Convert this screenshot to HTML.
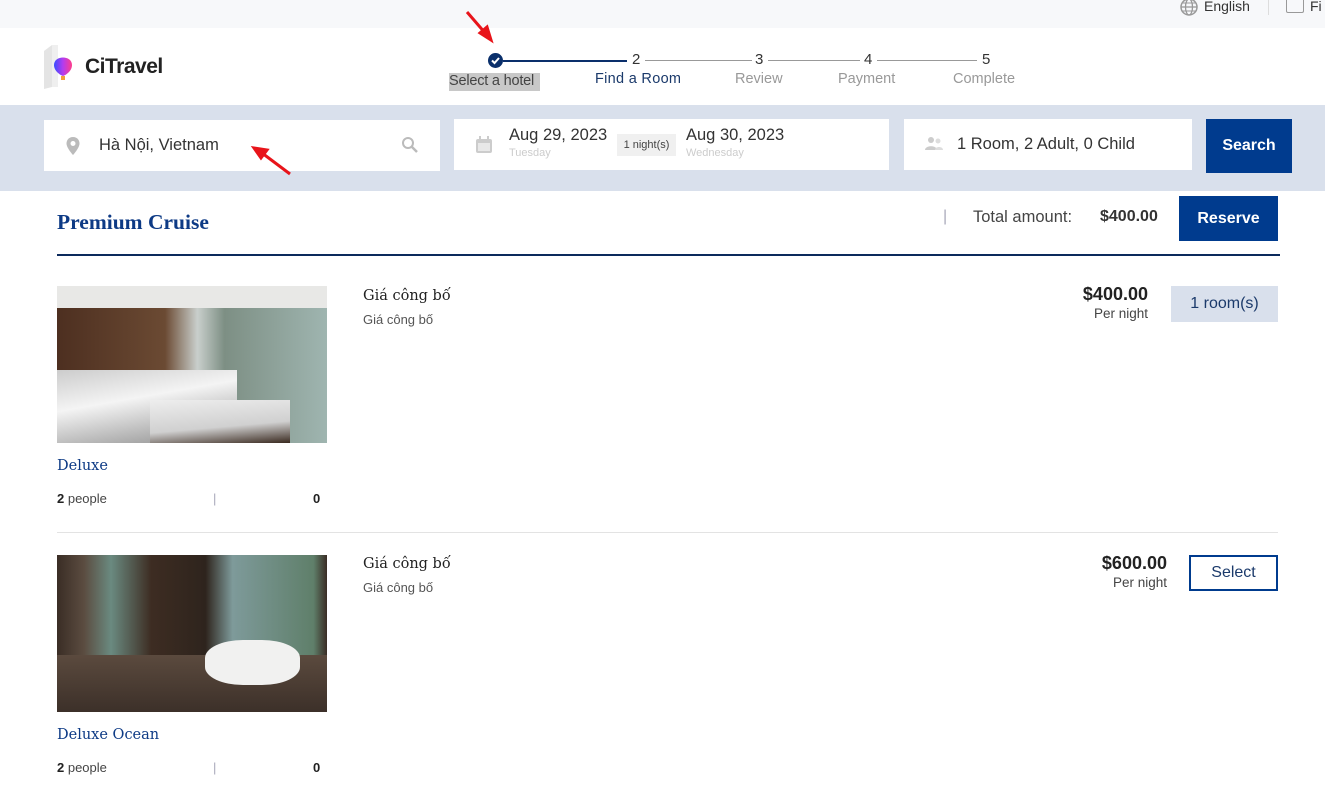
<!DOCTYPE html>
<html><head><meta charset="utf-8"><style>
*{margin:0;padding:0;box-sizing:border-box}
body{width:1325px;height:794px;overflow:hidden;background:#fff;font-family:"Liberation Sans",sans-serif;color:#222;position:relative}
.a{position:absolute;white-space:nowrap}
.serif{font-family:"DejaVu Serif","Liberation Serif",serif}
.box{position:absolute;background:#fff}
</style></head><body>
<div class="a" style="left:0;top:0;width:1325px;height:28px;background:#f7f8fa"></div>
<svg class="a" style="left:1179px;top:-3px" width="20" height="20" viewBox="0 0 20 20"><circle cx="10" cy="10" r="8" fill="none" stroke="#999" stroke-width="1.5"/><ellipse cx="10" cy="10" rx="3.5" ry="8" fill="none" stroke="#999" stroke-width="1.3"/><line x1="2" y1="10" x2="18" y2="10" stroke="#999" stroke-width="1.3"/><line x1="3.5" y1="6" x2="16.5" y2="6" stroke="#999"/><line x1="3.5" y1="14" x2="16.5" y2="14" stroke="#999"/></svg>
<div class="a" style="left:1204px;top:-2px;font-size:14px;color:#333">English</div>
<div class="a" style="left:1268px;top:0;width:1px;height:15px;background:#ddd"></div>
<div class="a" style="left:1286px;top:-2px;width:18px;height:15px;border:1.5px solid #999;border-top:none;border-radius:0 0 2px 2px"></div>
<div class="a" style="left:1310px;top:-2px;font-size:14px;color:#333">Fi</div>

<svg class="a" style="left:42px;top:43px" width="32" height="48" viewBox="0 0 32 48"><path d="M2 8 L10 2 L10 44 L2 46 Z" fill="#e4e4e4"/><path d="M10 2 L16 2 L16 44 L10 44Z" fill="#efefef"/><path d="M12 22 C12 12 30 12 30 22 C30 28 24 32 21 33 C18 32 12 28 12 22Z" fill="url(#g)"/><rect x="19" y="33" width="4" height="4" fill="#f4a13a"/><defs><linearGradient id="g" x1="0" x2="1"><stop offset="0" stop-color="#3a4dff"/><stop offset=".5" stop-color="#b43cf0"/><stop offset="1" stop-color="#ff3d8a"/></linearGradient></defs></svg>
<div class="a" style="left:85px;top:55px;font-size:21px;font-weight:bold;color:#222;letter-spacing:-.5px">CiTravel</div>

<div class="a" style="left:488px;top:53px;width:15px;height:15px;border-radius:50%;background:#0a2f6b"></div>
<svg class="a" style="left:488px;top:53px" width="15" height="15"><path d="M4 7.5 L6.5 10 L11 5" stroke="#fff" stroke-width="2" fill="none"/></svg>
<div class="a" style="left:503px;top:60px;width:124px;height:1.5px;background:#0a2f6b"></div>
<div class="a" style="left:645px;top:60px;width:107px;height:1px;background:#999"></div>
<div class="a" style="left:768px;top:60px;width:92px;height:1px;background:#999"></div>
<div class="a" style="left:877px;top:60px;width:100px;height:1px;background:#999"></div>
<div class="a" style="left:632px;top:51px;font-size:15px;color:#333">2</div>
<div class="a" style="left:755px;top:51px;font-size:15px;color:#333">3</div>
<div class="a" style="left:864px;top:51px;font-size:15px;color:#333">4</div>
<div class="a" style="left:982px;top:51px;font-size:15px;color:#333">5</div>
<div class="a" style="left:449px;top:73px;width:91px;height:18px;background:#c8c8c8"></div>
<div class="a" style="left:449px;top:73px;font-size:14.5px;color:#444;letter-spacing:-.2px">Select a hotel</div>
<div class="a" style="left:595px;top:71px;font-size:14.5px;color:#1b3a6b;letter-spacing:.3px">Find a Room</div>
<div class="a" style="left:735px;top:71px;font-size:14.5px;color:#999">Review</div>
<div class="a" style="left:838px;top:71px;font-size:14.5px;color:#999">Payment</div>
<div class="a" style="left:953px;top:71px;font-size:14.5px;color:#999">Complete</div>

<div class="a" style="left:0;top:105px;width:1325px;height:86px;background:#d9e0ec"></div>
<div class="box" style="left:44px;top:120px;width:396px;height:51px"></div>
<svg class="a" style="left:65px;top:136px" width="16" height="20" viewBox="0 0 16 20"><path d="M8 1 C3.5 1 1.5 4.5 1.5 7.5 C1.5 12 8 19 8 19 C8 19 14.5 12 14.5 7.5 C14.5 4.5 12.5 1 8 1Z" fill="#bbb"/><circle cx="8" cy="7.5" r="2.5" fill="#fff"/></svg>
<div class="a" style="left:99px;top:136px;font-size:16.5px;color:#333">Hà Nội, Vietnam</div>
<svg class="a" style="left:401px;top:136px" width="18" height="18"><circle cx="7" cy="7" r="5" stroke="#bbb" stroke-width="2" fill="none"/><line x1="11" y1="11" x2="16" y2="16" stroke="#bbb" stroke-width="2.5"/></svg>
<div class="box" style="left:454px;top:119px;width:435px;height:51px"></div>
<svg class="a" style="left:475px;top:136px" width="18" height="18"><rect x="1" y="3" width="16" height="14" rx="2" fill="#ccc"/><rect x="3" y="7" width="12" height="8" fill="#e8e8e8"/><rect x="4" y="0" width="2" height="4" fill="#ccc"/><rect x="12" y="0" width="2" height="4" fill="#ccc"/></svg>
<div class="a" style="left:509px;top:126px;font-size:16.5px;color:#333">Aug 29, 2023</div>
<div class="a" style="left:509px;top:147px;font-size:11px;color:#ccc">Tuesday</div>
<div class="a" style="left:617px;top:134px;width:59px;height:22px;background:#f0f0f0;font-size:11px;color:#444;text-align:center;line-height:22px">1 night(s)</div>
<div class="a" style="left:686px;top:126px;font-size:16.5px;color:#333">Aug 30, 2023</div>
<div class="a" style="left:686px;top:147px;font-size:11px;color:#ccc">Wednesday</div>
<div class="box" style="left:904px;top:119px;width:288px;height:51px"></div>
<svg class="a" style="left:924px;top:136px" width="20" height="16"><circle cx="7" cy="4" r="3" fill="#ccc"/><path d="M1 14 C1 9 13 9 13 14Z" fill="#ccc"/><circle cx="14" cy="5" r="2.5" fill="#ddd"/><path d="M11 14 C11 10 19 10 19 14Z" fill="#ddd"/></svg>
<div class="a" style="left:957px;top:135px;font-size:16.5px;color:#333">1 Room, 2 Adult, 0 Child</div>
<div class="a" style="left:1206px;top:119px;width:86px;height:54px;background:#003b8e;color:#fff;font-size:16px;font-weight:bold;text-align:center;line-height:54px">Search</div>

<div class="a" style="left:57px;top:210px;font-family:'Liberation Serif',serif;font-size:21.5px;font-weight:bold;color:#0d3a85">Premium Cruise</div>
<div class="a" style="left:943px;top:208px;font-size:16px;color:#aab">|</div>
<div class="a" style="left:973px;top:208px;font-size:16.5px;color:#444">Total amount:</div>
<div class="a" style="left:1100px;top:208px;font-size:16px;font-weight:bold;color:#333">$400.00</div>
<div class="a" style="left:1179px;top:196px;width:99px;height:45px;background:#003b8e;color:#fff;font-size:16px;font-weight:bold;text-align:center;line-height:45px">Reserve</div>
<div class="a" style="left:57px;top:254px;width:1223px;height:2px;background:#0c2a5c"></div>

<div class="a" style="left:57px;top:286px;width:270px;height:157px;background:linear-gradient(180deg,#e8e8e6 0 14%,transparent 14%),linear-gradient(90deg,#4d2f20 0,#6b4a33 40%,#c9cfcc 52%,#7d8f84 62%,#9fb5b0 100%)"></div>
<div class="a" style="left:57px;top:370px;width:180px;height:73px;background:linear-gradient(170deg,#ccc 0,#f4f4f4 40%,#8a8a8a 100%)"></div>
<div class="a" style="left:150px;top:400px;width:140px;height:43px;background:linear-gradient(175deg,#eee,#d0d0d0 60%,#3a2a20)"></div>
<div class="a serif" style="left:57px;top:458px;font-size:14.5px;color:#0d3a85">Deluxe</div>
<div class="a" style="left:57px;top:491px;font-size:13px;color:#444"><b style="color:#222">2</b> people</div>
<div class="a" style="left:213px;top:491px;font-size:13px;color:#aab">|</div>
<div class="a" style="left:313px;top:491px;font-size:13px;font-weight:bold;color:#222">0</div>
<div class="a serif" style="left:363px;top:288px;font-size:14.5px;color:#222">Giá công bố</div>
<div class="a" style="left:363px;top:312px;font-size:13px;color:#555">Giá công bố</div>
<div class="a" style="left:1048px;top:284px;width:100px;text-align:right;font-size:18px;font-weight:bold;color:#222">$400.00</div>
<div class="a" style="left:1048px;top:306px;width:100px;text-align:right;font-size:13.5px;color:#444">Per night</div>
<div class="a" style="left:1171px;top:286px;width:107px;height:36px;background:#d9e0ec;color:#1b3a6b;font-size:16px;text-align:center;line-height:36px">1 room(s)</div>
<div class="a" style="left:57px;top:532px;width:1221px;height:1px;background:#e3e3e3"></div>

<div class="a" style="left:57px;top:555px;width:270px;height:157px;background:linear-gradient(90deg,#3a2d25 0,#5b4c40 10%,#6a8a80 20%,#3d2c22 35%,#2e241d 55%,#7e9a9a 65%,#5f7f6a 95%,#3a2d25 100%)"></div>
<div class="a" style="left:57px;top:655px;width:270px;height:57px;background:linear-gradient(180deg,#5b4a3e,#3c3029)"></div>
<div class="a" style="left:205px;top:640px;width:95px;height:45px;border-radius:40%;background:#f1f1f0"></div>
<div class="a serif" style="left:57px;top:727px;font-size:14.5px;color:#0d3a85">Deluxe Ocean</div>
<div class="a" style="left:57px;top:760px;font-size:13px;color:#444"><b style="color:#222">2</b> people</div>
<div class="a" style="left:213px;top:760px;font-size:13px;color:#aab">|</div>
<div class="a" style="left:313px;top:760px;font-size:13px;font-weight:bold;color:#222">0</div>
<div class="a serif" style="left:363px;top:556px;font-size:14.5px;color:#222">Giá công bố</div>
<div class="a" style="left:363px;top:580px;font-size:13px;color:#555">Giá công bố</div>
<div class="a" style="left:1067px;top:553px;width:100px;text-align:right;font-size:18px;font-weight:bold;color:#222">$600.00</div>
<div class="a" style="left:1067px;top:575px;width:100px;text-align:right;font-size:13.5px;color:#444">Per night</div>
<div class="a" style="left:1189px;top:555px;width:89px;height:36px;border:2px solid #003b8e;color:#1b3a6b;font-size:16px;text-align:center;line-height:32px">Select</div>

<svg class="a" style="left:0;top:0" width="1325" height="794" viewBox="0 0 1325 794"><g stroke="#e8141a" stroke-width="3" fill="#e8141a"><line x1="467" y1="12" x2="486" y2="34"/><path d="M491 40 L480 33 L487 27Z"/><line x1="290" y1="174" x2="262" y2="153"/><path d="M254 148 L267 150 L261 158Z"/></g></svg>
</body></html>
